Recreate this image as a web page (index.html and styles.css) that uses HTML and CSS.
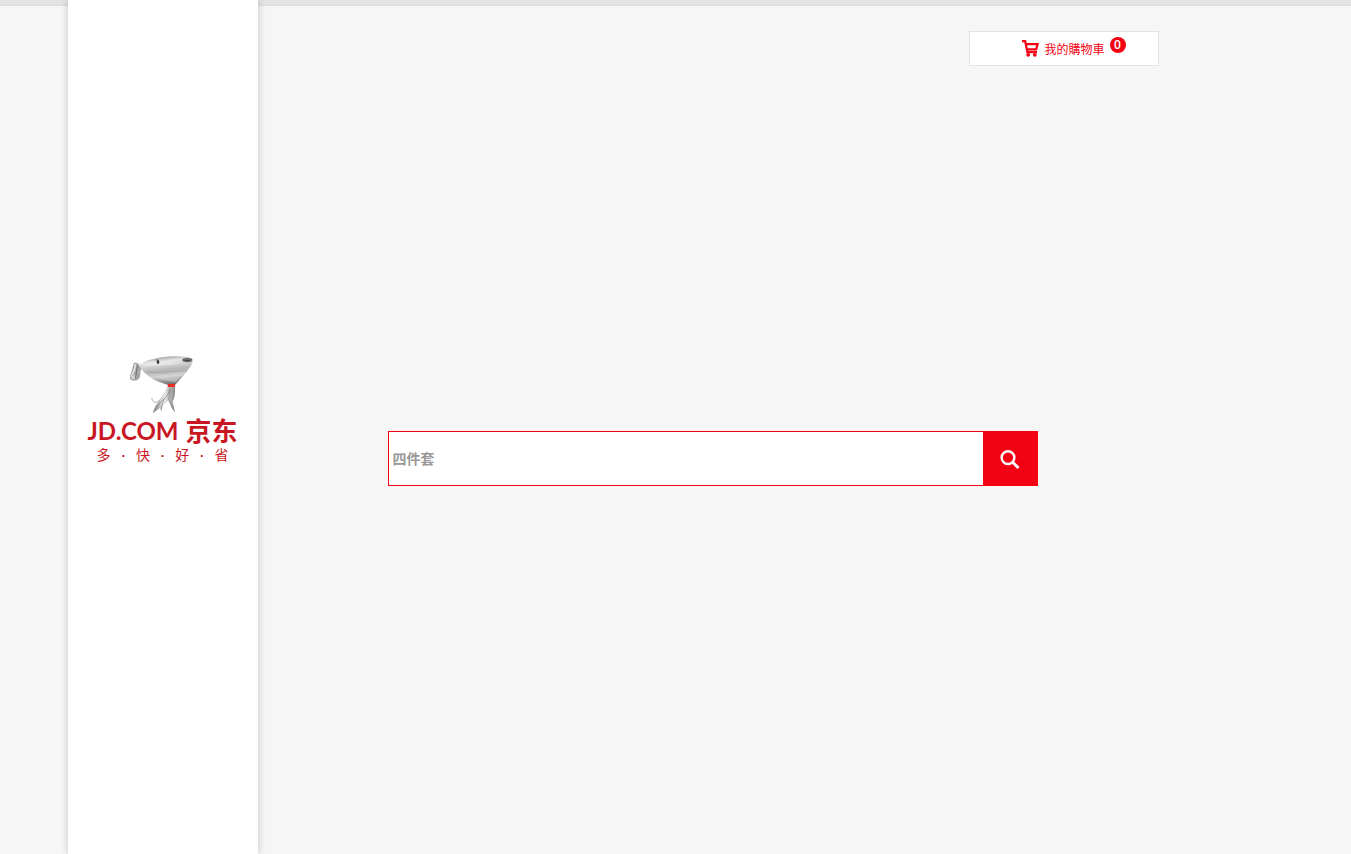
FILE: index.html
```html
<!DOCTYPE html>
<html lang="zh">
<head>
  <meta charset="UTF-8" />
  <meta name="viewport" content="width=device-width, initial-scale=1" />
  <title>京东</title>
  <link rel="stylesheet" href="styles.css">
</head>
<body>
  <aside class="side">
    <a class="logo" href="#">
      <svg class="joy" viewBox="30 15 198 180" aria-hidden="true">
        <defs>
          <linearGradient id="head" x1="0.3" y1="0" x2="0.5" y2="1">
            <stop offset="0" stop-color="#8f8f8f" />
            <stop offset="0.2" stop-color="#e8e8e8" />
            <stop offset="0.5" stop-color="#b5b5b5" />
            <stop offset="0.7" stop-color="#cecece" />
            <stop offset="1" stop-color="#696969" />
          </linearGradient>
          <linearGradient id="body" x1="0" y1="0" x2="1" y2="0">
            <stop offset="0" stop-color="#777777" />
            <stop offset="0.5" stop-color="#eeeeee" />
            <stop offset="1" stop-color="#888888" />
          </linearGradient>
        </defs>
        <!-- ear -->
        <path d="M68 54C62 44 54 35 41 39C38 56 32 71 27 84C31 93 48 95 57 86C66 74 56 60 68 54Z" fill="#a6a6a6" />
        <path d="M46 42C47 58 37 71 33 80" fill="none" stroke="#e0e0e0" stroke-width="5" />
        <path d="M54 45C47 60 51 74 45 85" fill="none" stroke="#707070" stroke-width="3" />
        <path d="M36 80L46 74L43 87L33 86Z" fill="#dcdcdc" />
        <!-- head -->
        <path d="M54 42C59 42 63 40 68 38C98 22 156 14 203 21C222 25 219 39 211 50C199 68 183 85 167 103C157 109 145 106 135 102C108 93 74 80 54 42Z" fill="url(#head)" />
        <path d="M75 48C98 34 144 35 184 41C151 43 111 48 75 48Z" fill="#f0f0f0" opacity="0.6" />
        <path d="M80 65C119 72 148 63 202 62" fill="none" stroke="#9a9a9a" stroke-width="2" />
        <path d="M93 76C120 79 149 73 188 70L168 97C143 94 117 87 93 76Z" fill="#dedede" opacity="0.4" />
        <ellipse cx="202" cy="30" rx="15" ry="6" fill="#444" stroke="#999" stroke-width="2" />
        <path d="M190 31C200 26 209 28 216 32" fill="none" stroke="#777" stroke-width="3" />
        <path d="M110 31L117 31L118 40L111 42Z" fill="#333" />
        <path d="M105 30L116 29" stroke="#777" stroke-width="2" />
        <!-- body, arm and legs -->
        <path d="M144 115C134 129 126 145 117 153C108 160 99 158 95 144" fill="none" stroke="#aaa" stroke-width="3" />
        <path d="M144 108L164 108C167 124 164 145 158 155L165 187C154 176 150 164 145 151L128 169L124 187L120 174L98 190C104 173 108 161 119 153C134 142 132 121 144 108Z" fill="url(#body)" />
        <path d="M148 116C150 134 132 147 121 157L104 181M151 119L146 148L161 179M132 144L123 180" fill="none" stroke="#7f7f7f" stroke-width="2" />
        <path d="M144 102L166 102L164 111L143 111Z" fill="#ef2c22" />
      </svg>
      <span class="brand"><span>JD.COM</span><span class="brand-cn">京东</span></span>
      <span class="slogan"><span>多</span><span>·</span><span>快</span><span>·</span><span>好</span><span>·</span><span>省</span></span>
    </a>
  </aside>

  <main class="main">
    <a class="cart" href="#">
      <svg class="cart-icon" viewBox="0 0 17 17" aria-hidden="true">
        <path d="M0 1.2H3.2L5.4 12.2H15" fill="none" stroke="#f30213" stroke-width="2.2" />
        <path d="M4 4.2H15.6L14.2 9.4H5" fill="none" stroke="#f30213" stroke-width="2.2" />
        <circle cx="6.2" cy="14.8" r="1.9" fill="#f30213" />
        <circle cx="12.8" cy="14.8" r="1.9" fill="#f30213" />
      </svg>
      <span>我的購物車</span>
      <span class="count">0</span>
    </a>

    <form class="search">
      <input type="text" name="keyword" placeholder="四件套" aria-label="搜索" />
      <button type="submit" aria-label="搜索">
        <svg class="search-icon" viewBox="0 0 20 20" aria-hidden="true">
          <circle cx="8" cy="8.6" r="6.4" fill="none" stroke="#fff" stroke-width="2.4" />
          <path d="M12.5 13L18.5 19" stroke="#fff" stroke-width="3" />
        </svg>
      </button>
    </form>
  </main>
</body>
</html>
```
FILE: styles.css
```css
body {
  display: flex;
  min-height: 100vh;
  margin: 0;
  font-family: "Open Sans", "Noto Sans CJK TC", sans-serif;
  font-size: 12px;
  /* thin strip along the top of the page */
  background: linear-gradient(#e3e3e3 5px, #dddddd 5px, #dddddd 6px, #f6f6f6 6px);
}

a {
  text-decoration: none;
}

.side {
  flex: 0 0 190px;
  display: flex;
  flex-direction: column;
  margin-left: 5%;
  background: #fff;
  box-shadow: 0 0 8px rgba(0, 0, 0, 0.2);
}

.logo {
  display: flex;
  flex-direction: column;
  align-items: center;
  margin-top: 355px;
  color: #c81623;
  font-family: Lato, "Noto Sans CJK SC", sans-serif;
}

.joy {
  width: 66px;
  height: 60px;
}

.brand {
  display: flex;
  justify-content: space-between;
  align-items: center;
  width: 150px;
  height: 32px;
  font-size: 24px;
  line-height: 32px;
  font-weight: 700;
}

.brand-cn {
  font-size: 26px;
}

.slogan {
  display: flex;
  justify-content: space-between;
  width: 132px;
  font-size: 14px;
  line-height: 16px;
}

.main {
  flex: 1;
  display: flex;
  flex-direction: column;
}

.cart {
  display: flex;
  align-items: center;
  justify-content: center;
  gap: 5px;
  align-self: flex-end;
  box-sizing: border-box;
  width: 190px;
  height: 35px;
  margin: 31px 192px 0 0;
  padding-left: 20px;
  border: 1px solid #e3e4e5;
  background: #fff;
  color: #f30213;
}

.cart-icon {
  width: 17px;
  height: 17px;
}

.count {
  width: 16px;
  height: 16px;
  margin-bottom: 8px;
  border-radius: 50%;
  background: #f30213;
  color: #fff;
  font-weight: 600;
  line-height: 16px;
  text-align: center;
}

.search {
  display: flex;
  box-sizing: border-box;
  width: 650px;
  height: 55px;
  margin: 365px 0 0 130px;
  border: 1px solid #f30213;
  background: #fff;
}

.search input {
  flex: 1;
  min-width: 0;
  padding: 0 4px;
  border: none;
  outline: none;
  background: transparent;
  font: bold 14px "Open Sans", "Noto Sans CJK SC", sans-serif;
}

.search input::placeholder {
  color: #989898;
}

.search button {
  display: flex;
  align-items: center;
  justify-content: center;
  width: 54px;
  padding: 0;
  border: none;
  background: #f30213;
  cursor: pointer;
}

.search-icon {
  width: 20px;
  height: 20px;
}
```
